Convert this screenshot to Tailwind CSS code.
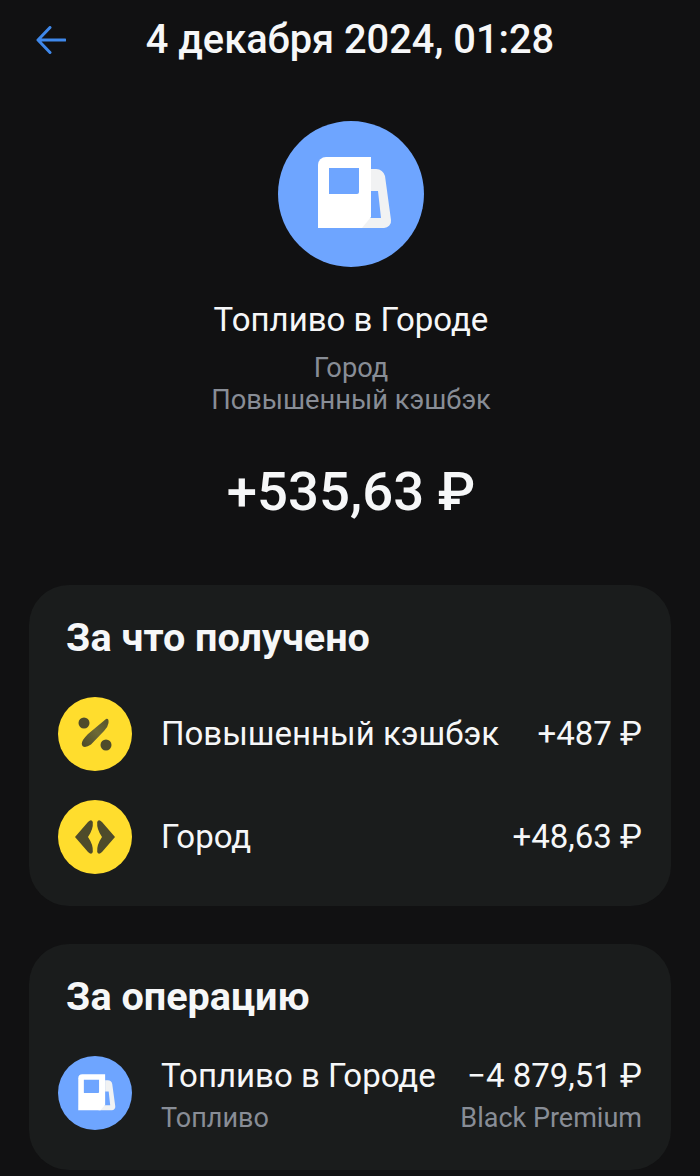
<!doctype html>
<html lang="ru">
<head>
<meta charset="utf-8">
<meta name="viewport" content="width=device-width,initial-scale=1">
<title>Кэшбэк</title>
<script src="https://cdn.jsdelivr.net/npm/@tailwindcss/browser@4"></script>
</head>
<body class="w-[700px] h-[1176px] overflow-hidden bg-[#111112] text-[#f6f7f8] font-['Roboto','Noto_Sans',sans-serif]">

<svg class="absolute w-0 h-0">
  <defs>
    <linearGradient id="slash" x1="0" y1="1" x2="1" y2="0">
      <stop offset="0" stop-color="#4b4829"/>
      <stop offset=".55" stop-color="#6d6936"/>
      <stop offset="1" stop-color="#55522d"/>
    </linearGradient>
  </defs>
  <symbol id="pump" viewBox="0 0 146 146">
    <path d="M93 48h5a9 9 0 0 1 9 7l6 44a7 7 0 0 1-7 8H80V97h23l-3-27h-7z" fill="#f1f2f3"/>
    <path d="M40 107V44a8 8 0 0 1 8-8h45v60l-9 11z" fill="#fff"/>
    <path d="M51 47h30v24a2 2 0 0 1-2 2H51z" fill="#6ea5ff"/>
  </symbol>
</svg>

<!-- шапка -->
<header class="relative h-[80px] flex items-center justify-center">
  <svg class="absolute left-[36px] top-[26px] w-[30px] h-[30px]" viewBox="0 0 30 30" fill="none" stroke="#3f88ea" stroke-width="3" stroke-linecap="round" stroke-linejoin="round">
    <path d="M14 1.500 2 14l12 12.500M2.500 14H29"/>
  </svg>
  <h1 class="text-[39.800px] leading-[44px] font-medium">4 декабря 2024, 01:28</h1>
</header>

<!-- операция -->
<section class="flex flex-col items-center pt-[41px]">
  <div class="ml-[2px] w-[146px] h-[146px] rounded-full bg-[#6ea5ff]">
    <svg class="w-full h-full"><use href="#pump"/></svg>
  </div>
  <div class="ml-[2px] mt-[33px] text-[33px] leading-[40px]">Топливо в Городе</div>
  <div class="ml-[2px] mt-[12px] text-[27.300px] leading-[32px] text-[#888d96] text-center">Город<br>Повышенный кэшбэк</div>
  <div class="ml-[2px] mt-[45px] text-[54.500px] leading-[60px] font-medium">+535,63 ₽</div>
</section>

<main class="mt-[64px] mx-[29px] flex flex-col gap-[38px]">
  <section class="h-[321px] rounded-[40px] bg-[#1a1c1c] pt-[30px] px-[29px]">
    <h2 class="pl-[8px] text-[39.600px] leading-[46px] font-bold">За что получено</h2>
    <div class="mt-[36px] flex items-center gap-[29px]">
      <div class="w-[74px] h-[74px] rounded-full bg-[#ffdd2d] shrink-0">
        <svg class="w-full h-full" viewBox="-37 -37 74 74">
          <circle cx="-11" cy="-11" r="5.500" fill="#4e4b2b"/>
          <circle cx="11" cy="11" r="5.500" fill="#4e4b2b"/>
          <path d="M11-15Q14-16 13.500-11 13-7 9-3L-4 10.500Q-9 14-12 12.500-14.500 10-12 6-10 3-7 0z" fill="url(#slash)"/>
        </svg>
      </div>
      <div class="flex-1 text-[33px] leading-[40px]">Повышенный кэшбэк</div>
      <div class="text-[33px] leading-[40px]">+487 ₽</div>
    </div>
    <div class="mt-[29px] flex items-center gap-[29px]">
      <div class="w-[74px] h-[74px] rounded-full bg-[#ffdd2d] shrink-0">
        <svg class="w-full h-full" viewBox="-37 -37 74 74" fill="#4e4b2b">
          <path d="M-20 0-7-15Q-3.500-18.500-2.200-15-1.500-8-7 0-1.500 8-2.200 15-3.500 18.500-7 15z"/>
          <path d="M20 0 7-15Q3.500-18.500 2.200-15 1.500-8 7 0 1.500 8 2.200 15 3.500 18.500 7 15z"/>
        </svg>
      </div>
      <div class="flex-1 text-[33px] leading-[40px]">Город</div>
      <div class="text-[33px] leading-[40px]">+48,63 ₽</div>
    </div>
  </section>

  <section class="h-[226px] rounded-[40px] bg-[#1a1c1c] pt-[30px] px-[29px]">
    <h2 class="pl-[8px] text-[39.600px] leading-[46px] font-bold">За операцию</h2>
    <div class="mt-[36px] flex items-start gap-[29px]">
      <div class="w-[74px] h-[74px] rounded-full bg-[#6ea5ff] shrink-0">
        <svg class="w-full h-full"><use href="#pump"/></svg>
      </div>
      <div class="flex-1">
        <div class="flex justify-between text-[33px] leading-[40px]"><span>Топливо в Городе</span><span>−4 879,51 ₽</span></div>
        <div class="mt-[5px] flex justify-between text-[27px] leading-[34px] text-[#888d96]"><span>Топливо</span><span>Black Premium</span></div>
      </div>
    </div>
  </section>
</main>

</body>
</html>
